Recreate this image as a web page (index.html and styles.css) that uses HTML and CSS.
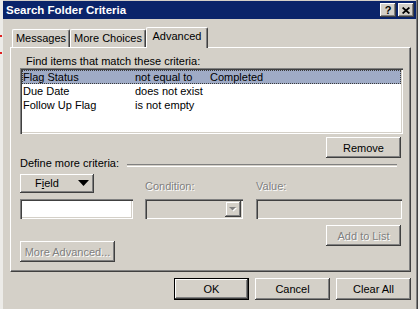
FILE: index.html
```html
<!DOCTYPE html>
<html lang="en">
<head>
    <meta charset="UTF-8">
    <title>Search Folder Criteria</title>
    <link rel="stylesheet" href="styles.css">
</head>
<body>
    <div class="window">
        <div class="title-bar">
            <span class="title-text">Search Folder Criteria</span>
            <div class="caption-buttons">
                <span class="caption-btn help">?</span>
                <span class="caption-btn close">
                    <svg width="8" height="7" viewBox="0 0 8 7"><path d="M0.6 0.5L7.4 6.5M7.4 0.5L0.6 6.5" stroke="#000" stroke-width="1.7"/></svg>
                </span>
            </div>
        </div>

        <div class="dialog-body">
            <div class="tabs">
                <div class="tab tab-messages">Messages</div>
                <div class="tab tab-choices">More Choices</div>
                <div class="tab tab-advanced selected">Advanced</div>
            </div>

            <div class="panel">
                <p class="group-label">Find items that match these criteria:</p>
                <div class="criteria-list">
                    <div class="criteria-row selected"><span>Flag Status</span><span>not equal to</span><span>Completed</span></div>
                    <div class="criteria-row"><span>Due Date</span><span>does not exist</span><span></span></div>
                    <div class="criteria-row"><span>Follow Up Flag</span><span>is not empty</span><span></span></div>
                </div>
                <div class="remove-row">
                    <button class="btn">Remove</button>
                </div>

                <div class="section-head">
                    <span class="section-label">Define more criteria:</span>
                    <span class="etched-line"></span>
                </div>

                <div class="criteria-form">
                    <button class="btn field-btn">
                        <span>F<u>i</u>eld</span>
                        <svg width="11" height="6" viewBox="0 0 11 6"><path d="M0 0h11L5.5 6z" fill="#000"/></svg>
                    </button>
                    <span class="form-label disabled-text">Condition:</span>
                    <span class="form-label disabled-text">Value:</span>
                    <input class="text-input" type="text">
                    <div class="combo">
                        <span class="combo-btn">
                            <svg width="8" height="5" viewBox="0 0 8 5"><path d="M1 1h7L4.5 4.5z" fill="#fff"/><path d="M0 0h7L3.5 3.5z" fill="#808080"/></svg>
                        </span>
                    </div>
                    <input class="text-input value-input" type="text" disabled>
                </div>

                <div class="action-row">
                    <button class="btn more-btn" disabled>More Advanced...</button>
                    <button class="btn" disabled>Add to List</button>
                </div>
            </div>

            <div class="dialog-buttons">
                <button class="btn default-btn">OK</button>
                <button class="btn">Cancel</button>
                <button class="btn">Clear All</button>
            </div>
        </div>
    </div>
</body>
</html>
```

FILE: styles.css
```css
:root {
    --face: #d4d0c8;
    --shadow: #808080;
    --dark: #404040;
    --light: #ffffff;
    --title-blue: #0a246a;
    --select: #9fabc6;
}

body {
    margin: 0;
    font-family: "Liberation Sans", Arial, sans-serif;
    font-size: 11px;
    color: #000;
    /* bits of whatever sits behind the window on the left */
    background: linear-gradient(to bottom, transparent 35px, #e02020 35px, #e02020 37px, transparent 37px, transparent 52px, #e02020 52px, #e02020 54px, transparent 54px) no-repeat 0 0 / 2px 100%, #ecebe8;
    overflow: hidden;
}

.window {
    margin-left: 3px;
    width: 414px;
    height: 309px;
    padding-top: 1px;
    box-sizing: border-box;
    background: var(--face);
    border-right: 1px solid var(--shadow);
    box-shadow: 1px 0 0 var(--dark);
}

/* title bar */
.title-bar {
    height: 18px;
    background: var(--title-blue);
    display: flex;
    align-items: center;
    padding: 0 2px 0 3px;
}

.title-text {
    color: #fff;
    font-weight: bold;
    font-size: 11.5px;
    line-height: 13px;
}

.caption-buttons {
    margin-left: auto;
    display: flex;
    gap: 2px;
}

.caption-btn {
    width: 16px;
    height: 14px;
    background: var(--face);
    box-shadow: inset -1px -1px var(--dark), inset 1px 1px var(--light), inset -2px -2px var(--shadow);
    display: flex;
    align-items: center;
    justify-content: center;
    font-weight: bold;
    font-size: 11px;
    line-height: 14px;
}

.caption-btn.help {
    padding-bottom: 1px;
    box-sizing: border-box;
}

/* dialog content */
.dialog-body {
    padding: 8px 0 0 7px;
}

.tabs {
    display: flex;
    align-items: flex-end;
    height: 20px;
    padding-left: 2px;
}

.tab {
    height: 18px;
    box-sizing: border-box;
    border-top: 1px solid var(--light);
    border-left: 1px solid var(--light);
    border-right: 1px solid var(--dark);
    box-shadow: inset -1px 0 var(--shadow);
    border-radius: 2px 2px 0 0;
    padding-top: 2px;
    line-height: 13px;
    text-align: center;
    background: var(--face);
}

.tab-messages { width: 58px; }
.tab-choices { width: 76px; }

.tab-advanced {
    width: 62px;
}

.tab.selected {
    height: 21px;
    margin-bottom: -1px;
    position: relative;
    z-index: 1;
}

.panel {
    width: 401px;
    height: 225px;
    box-sizing: border-box;
    border-top: 1px solid var(--light);
    border-left: 1px solid var(--light);
    border-right: 1px solid var(--dark);
    border-bottom: 1px solid var(--dark);
    box-shadow: inset -1px -1px var(--shadow);
    padding: 7px 0 0 9px;
}

.group-label {
    margin: 0 0 0 6px;
    line-height: 13px;
}

.criteria-list {
    width: 383px;
    height: 66px;
    box-sizing: border-box;
    padding: 2px;
    background: #fff;
    box-shadow: inset 1px 1px var(--shadow), inset 2px 2px var(--dark), inset -1px -1px var(--light), inset -2px -2px var(--face);
}

.criteria-row {
    display: grid;
    grid-template-columns: 112px 75px auto;
    height: 14px;
    line-height: 14px;
    padding-left: 1px;
    white-space: nowrap;
}

.criteria-row.selected {
    background: var(--select);
    outline: 1px dotted #3a3a3a;
    outline-offset: -1px;
}

.remove-row {
    width: 381px;
    display: flex;
    justify-content: flex-end;
    margin-top: 3px;
}

/* buttons */
.btn {
    font-family: inherit;
    font-size: 11px;
    color: #000;
    background: var(--face);
    border: 0;
    padding: 0;
    margin: 0;
    width: 75px;
    height: 21px;
    box-shadow: inset -1px -1px var(--dark), inset 1px 1px var(--light), inset -2px -2px var(--shadow);
}

.btn:disabled,
.disabled-text {
    color: var(--shadow);
    text-shadow: 1px 1px 0 var(--light);
}

.section-head {
    display: flex;
    height: 11px;
    line-height: 11px;
    width: 377px;
}

.section-label {
    white-space: nowrap;
}

.etched-line {
    flex: 1;
    margin: 6px 0 0 8px;
    height: 1px;
    border-top: 1px solid var(--shadow);
    border-bottom: 1px solid var(--light);
}

.criteria-form {
    display: grid;
    grid-template-columns: 125px 111px 146px;
    row-gap: 6px;
    margin-top: 5px;
}

.field-btn {
    width: 74px;
    height: 19px;
    display: flex;
    align-items: center;
    padding: 0 5px 1px 15px;
    box-sizing: border-box;
}

.field-btn svg {
    margin-left: auto;
}

.form-label {
    align-self: end;
    line-height: 13px;
}

.text-input {
    width: 113px;
    height: 20px;
    box-sizing: border-box;
    border: 0;
    padding: 0 3px;
    margin: 0;
    font-family: inherit;
    font-size: 11px;
    background: #fff;
    box-shadow: inset 1px 1px var(--shadow), inset 2px 2px var(--dark), inset -1px -1px var(--light), inset -2px -2px var(--face);
    outline: none;
}

.value-input {
    width: 146px;
    background: var(--face);
}

.combo {
    width: 98px;
    height: 20px;
    box-sizing: border-box;
    padding: 2px;
    display: flex;
    justify-content: flex-end;
    background: var(--face);
    box-shadow: inset 1px 1px var(--shadow), inset 2px 2px var(--dark), inset -1px -1px var(--light), inset -2px -2px var(--face);
}

.combo-btn {
    width: 16px;
    height: 16px;
    display: flex;
    align-items: center;
    justify-content: center;
    background: var(--face);
    box-shadow: inset -1px -1px var(--dark), inset 1px 1px var(--face), inset -2px -2px var(--shadow), inset 2px 2px var(--light);
}

.action-row {
    width: 381px;
    display: flex;
    justify-content: space-between;
    align-items: flex-start;
    margin-top: 6px;
}

.more-btn {
    width: 95px;
    margin-top: 16px;
}

.dialog-buttons {
    width: 401px;
    display: flex;
    justify-content: flex-end;
    gap: 6px;
    margin-top: 6px;
}

.dialog-buttons .btn {
    height: 22px;
}

.default-btn {
    border: 1px solid #000;
}
```
